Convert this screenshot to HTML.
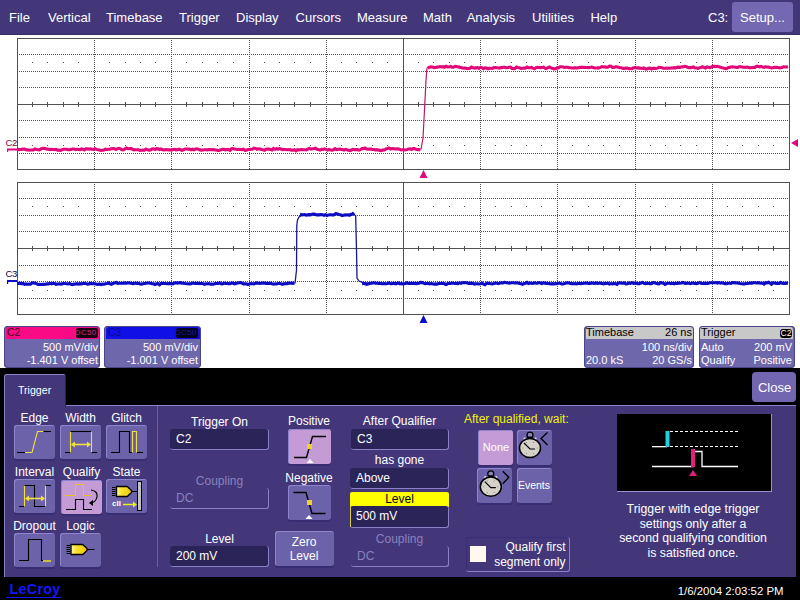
<!DOCTYPE html>
<html><head><meta charset="utf-8"><style>
html,body{margin:0;padding:0;width:800px;height:600px;overflow:hidden;background:#000;}
body{position:relative;font-family:"Liberation Sans", sans-serif;}
div{position:absolute;}
.t{white-space:nowrap;}
</style></head><body>
<div style="left:0px;top:0px;width:800px;height:35px;background:#43377a;box-shadow:inset 0 -1px 0 #382c68"></div><div style="left:0px;top:35px;width:800px;height:333px;background:#fff"></div><div style="left:0px;top:368px;width:800px;height:232px;background:#000"></div><div class="t" style="left:9.00px;top:11.00px;width:600px;font-size:13px;line-height:13px;color:#fff;text-align:left;">File</div><div class="t" style="left:48.00px;top:11.00px;width:600px;font-size:13px;line-height:13px;color:#fff;text-align:left;">Vertical</div><div class="t" style="left:106.00px;top:11.00px;width:600px;font-size:13px;line-height:13px;color:#fff;text-align:left;">Timebase</div><div class="t" style="left:179.00px;top:11.00px;width:600px;font-size:13px;line-height:13px;color:#fff;text-align:left;">Trigger</div><div class="t" style="left:236.00px;top:11.00px;width:600px;font-size:13px;line-height:13px;color:#fff;text-align:left;">Display</div><div class="t" style="left:295.60px;top:11.00px;width:600px;font-size:13px;line-height:13px;color:#fff;text-align:left;">Cursors</div><div class="t" style="left:357.00px;top:11.00px;width:600px;font-size:13px;line-height:13px;color:#fff;text-align:left;">Measure</div><div class="t" style="left:423.00px;top:11.00px;width:600px;font-size:13px;line-height:13px;color:#fff;text-align:left;">Math</div><div class="t" style="left:466.70px;top:11.00px;width:600px;font-size:13px;line-height:13px;color:#fff;text-align:left;">Analysis</div><div class="t" style="left:532.00px;top:11.00px;width:600px;font-size:13px;line-height:13px;color:#fff;text-align:left;">Utilities</div><div class="t" style="left:590.40px;top:11.00px;width:600px;font-size:13px;line-height:13px;color:#fff;text-align:left;">Help</div><div class="t" style="left:708.00px;top:11.00px;width:600px;font-size:13px;line-height:13px;color:#fff;text-align:left;">C3:</div><div style="left:732px;top:2px;width:61px;height:30px;background:#7468b2;border-radius:3px;"></div><div class="t" style="left:462.50px;top:11.00px;width:600px;font-size:13px;line-height:13px;color:#fff;text-align:center;">Setup...</div><svg style="position:absolute;left:0;top:0" width="800" height="370" shape-rendering="crispEdges"><line x1="19" y1="54.5" x2="788" y2="54.5" stroke="#505050" stroke-dasharray="1 1"/><line x1="19" y1="71.5" x2="788" y2="71.5" stroke="#505050" stroke-dasharray="1 1"/><line x1="19" y1="87.5" x2="788" y2="87.5" stroke="#505050" stroke-dasharray="1 1"/><line x1="19" y1="120.5" x2="788" y2="120.5" stroke="#505050" stroke-dasharray="1 1"/><line x1="19" y1="137.5" x2="788" y2="137.5" stroke="#505050" stroke-dasharray="1 1"/><line x1="19" y1="153.5" x2="788" y2="153.5" stroke="#505050" stroke-dasharray="1 1"/><line x1="94.5" y1="40" x2="94.5" y2="169" stroke="#505050" stroke-dasharray="1 1"/><line x1="171.5" y1="40" x2="171.5" y2="169" stroke="#505050" stroke-dasharray="1 1"/><line x1="249.5" y1="40" x2="249.5" y2="169" stroke="#505050" stroke-dasharray="1 1"/><line x1="326.5" y1="40" x2="326.5" y2="169" stroke="#505050" stroke-dasharray="1 1"/><line x1="480.5" y1="40" x2="480.5" y2="169" stroke="#505050" stroke-dasharray="1 1"/><line x1="557.5" y1="40" x2="557.5" y2="169" stroke="#505050" stroke-dasharray="1 1"/><line x1="635.5" y1="40" x2="635.5" y2="169" stroke="#505050" stroke-dasharray="1 1"/><line x1="712.5" y1="40" x2="712.5" y2="169" stroke="#505050" stroke-dasharray="1 1"/><rect x="17.5" y="38.5" width="772" height="131" fill="none" stroke="#505050"/><line x1="17" y1="104.5" x2="789" y2="104.5" stroke="#505050"/><line x1="403.5" y1="38" x2="403.5" y2="169" stroke="#505050"/><rect x="32" y="102" width="1" height="5" fill="#505050"/><rect x="32" y="62" width="1" height="1" fill="#505050"/><rect x="32" y="145" width="1" height="1" fill="#505050"/><rect x="47" y="102" width="1" height="5" fill="#505050"/><rect x="47" y="62" width="1" height="1" fill="#505050"/><rect x="47" y="145" width="1" height="1" fill="#505050"/><rect x="63" y="102" width="1" height="5" fill="#505050"/><rect x="63" y="62" width="1" height="1" fill="#505050"/><rect x="63" y="145" width="1" height="1" fill="#505050"/><rect x="78" y="102" width="1" height="5" fill="#505050"/><rect x="78" y="62" width="1" height="1" fill="#505050"/><rect x="78" y="145" width="1" height="1" fill="#505050"/><rect x="109" y="102" width="1" height="5" fill="#505050"/><rect x="109" y="62" width="1" height="1" fill="#505050"/><rect x="109" y="145" width="1" height="1" fill="#505050"/><rect x="125" y="102" width="1" height="5" fill="#505050"/><rect x="125" y="62" width="1" height="1" fill="#505050"/><rect x="125" y="145" width="1" height="1" fill="#505050"/><rect x="140" y="102" width="1" height="5" fill="#505050"/><rect x="140" y="62" width="1" height="1" fill="#505050"/><rect x="140" y="145" width="1" height="1" fill="#505050"/><rect x="155" y="102" width="1" height="5" fill="#505050"/><rect x="155" y="62" width="1" height="1" fill="#505050"/><rect x="155" y="145" width="1" height="1" fill="#505050"/><rect x="186" y="102" width="1" height="5" fill="#505050"/><rect x="186" y="62" width="1" height="1" fill="#505050"/><rect x="186" y="145" width="1" height="1" fill="#505050"/><rect x="202" y="102" width="1" height="5" fill="#505050"/><rect x="202" y="62" width="1" height="1" fill="#505050"/><rect x="202" y="145" width="1" height="1" fill="#505050"/><rect x="217" y="102" width="1" height="5" fill="#505050"/><rect x="217" y="62" width="1" height="1" fill="#505050"/><rect x="217" y="145" width="1" height="1" fill="#505050"/><rect x="233" y="102" width="1" height="5" fill="#505050"/><rect x="233" y="62" width="1" height="1" fill="#505050"/><rect x="233" y="145" width="1" height="1" fill="#505050"/><rect x="264" y="102" width="1" height="5" fill="#505050"/><rect x="264" y="62" width="1" height="1" fill="#505050"/><rect x="264" y="145" width="1" height="1" fill="#505050"/><rect x="279" y="102" width="1" height="5" fill="#505050"/><rect x="279" y="62" width="1" height="1" fill="#505050"/><rect x="279" y="145" width="1" height="1" fill="#505050"/><rect x="294" y="102" width="1" height="5" fill="#505050"/><rect x="294" y="62" width="1" height="1" fill="#505050"/><rect x="294" y="145" width="1" height="1" fill="#505050"/><rect x="310" y="102" width="1" height="5" fill="#505050"/><rect x="310" y="62" width="1" height="1" fill="#505050"/><rect x="310" y="145" width="1" height="1" fill="#505050"/><rect x="341" y="102" width="1" height="5" fill="#505050"/><rect x="341" y="62" width="1" height="1" fill="#505050"/><rect x="341" y="145" width="1" height="1" fill="#505050"/><rect x="356" y="102" width="1" height="5" fill="#505050"/><rect x="356" y="62" width="1" height="1" fill="#505050"/><rect x="356" y="145" width="1" height="1" fill="#505050"/><rect x="372" y="102" width="1" height="5" fill="#505050"/><rect x="372" y="62" width="1" height="1" fill="#505050"/><rect x="372" y="145" width="1" height="1" fill="#505050"/><rect x="387" y="102" width="1" height="5" fill="#505050"/><rect x="387" y="62" width="1" height="1" fill="#505050"/><rect x="387" y="145" width="1" height="1" fill="#505050"/><rect x="418" y="102" width="1" height="5" fill="#505050"/><rect x="418" y="62" width="1" height="1" fill="#505050"/><rect x="418" y="145" width="1" height="1" fill="#505050"/><rect x="433" y="102" width="1" height="5" fill="#505050"/><rect x="433" y="62" width="1" height="1" fill="#505050"/><rect x="433" y="145" width="1" height="1" fill="#505050"/><rect x="449" y="102" width="1" height="5" fill="#505050"/><rect x="449" y="62" width="1" height="1" fill="#505050"/><rect x="449" y="145" width="1" height="1" fill="#505050"/><rect x="464" y="102" width="1" height="5" fill="#505050"/><rect x="464" y="62" width="1" height="1" fill="#505050"/><rect x="464" y="145" width="1" height="1" fill="#505050"/><rect x="495" y="102" width="1" height="5" fill="#505050"/><rect x="495" y="62" width="1" height="1" fill="#505050"/><rect x="495" y="145" width="1" height="1" fill="#505050"/><rect x="511" y="102" width="1" height="5" fill="#505050"/><rect x="511" y="62" width="1" height="1" fill="#505050"/><rect x="511" y="145" width="1" height="1" fill="#505050"/><rect x="526" y="102" width="1" height="5" fill="#505050"/><rect x="526" y="62" width="1" height="1" fill="#505050"/><rect x="526" y="145" width="1" height="1" fill="#505050"/><rect x="541" y="102" width="1" height="5" fill="#505050"/><rect x="541" y="62" width="1" height="1" fill="#505050"/><rect x="541" y="145" width="1" height="1" fill="#505050"/><rect x="572" y="102" width="1" height="5" fill="#505050"/><rect x="572" y="62" width="1" height="1" fill="#505050"/><rect x="572" y="145" width="1" height="1" fill="#505050"/><rect x="588" y="102" width="1" height="5" fill="#505050"/><rect x="588" y="62" width="1" height="1" fill="#505050"/><rect x="588" y="145" width="1" height="1" fill="#505050"/><rect x="603" y="102" width="1" height="5" fill="#505050"/><rect x="603" y="62" width="1" height="1" fill="#505050"/><rect x="603" y="145" width="1" height="1" fill="#505050"/><rect x="619" y="102" width="1" height="5" fill="#505050"/><rect x="619" y="62" width="1" height="1" fill="#505050"/><rect x="619" y="145" width="1" height="1" fill="#505050"/><rect x="650" y="102" width="1" height="5" fill="#505050"/><rect x="650" y="62" width="1" height="1" fill="#505050"/><rect x="650" y="145" width="1" height="1" fill="#505050"/><rect x="665" y="102" width="1" height="5" fill="#505050"/><rect x="665" y="62" width="1" height="1" fill="#505050"/><rect x="665" y="145" width="1" height="1" fill="#505050"/><rect x="680" y="102" width="1" height="5" fill="#505050"/><rect x="680" y="62" width="1" height="1" fill="#505050"/><rect x="680" y="145" width="1" height="1" fill="#505050"/><rect x="696" y="102" width="1" height="5" fill="#505050"/><rect x="696" y="62" width="1" height="1" fill="#505050"/><rect x="696" y="145" width="1" height="1" fill="#505050"/><rect x="727" y="102" width="1" height="5" fill="#505050"/><rect x="727" y="62" width="1" height="1" fill="#505050"/><rect x="727" y="145" width="1" height="1" fill="#505050"/><rect x="742" y="102" width="1" height="5" fill="#505050"/><rect x="742" y="62" width="1" height="1" fill="#505050"/><rect x="742" y="145" width="1" height="1" fill="#505050"/><rect x="758" y="102" width="1" height="5" fill="#505050"/><rect x="758" y="62" width="1" height="1" fill="#505050"/><rect x="758" y="145" width="1" height="1" fill="#505050"/><rect x="773" y="102" width="1" height="5" fill="#505050"/><rect x="773" y="62" width="1" height="1" fill="#505050"/><rect x="773" y="145" width="1" height="1" fill="#505050"/><line x1="19" y1="198.5" x2="788" y2="198.5" stroke="#505050" stroke-dasharray="1 1"/><line x1="19" y1="215.5" x2="788" y2="215.5" stroke="#505050" stroke-dasharray="1 1"/><line x1="19" y1="231.5" x2="788" y2="231.5" stroke="#505050" stroke-dasharray="1 1"/><line x1="19" y1="265.5" x2="788" y2="265.5" stroke="#505050" stroke-dasharray="1 1"/><line x1="19" y1="281.5" x2="788" y2="281.5" stroke="#505050" stroke-dasharray="1 1"/><line x1="19" y1="298.5" x2="788" y2="298.5" stroke="#505050" stroke-dasharray="1 1"/><line x1="94.5" y1="184" x2="94.5" y2="314" stroke="#505050" stroke-dasharray="1 1"/><line x1="171.5" y1="184" x2="171.5" y2="314" stroke="#505050" stroke-dasharray="1 1"/><line x1="249.5" y1="184" x2="249.5" y2="314" stroke="#505050" stroke-dasharray="1 1"/><line x1="326.5" y1="184" x2="326.5" y2="314" stroke="#505050" stroke-dasharray="1 1"/><line x1="480.5" y1="184" x2="480.5" y2="314" stroke="#505050" stroke-dasharray="1 1"/><line x1="557.5" y1="184" x2="557.5" y2="314" stroke="#505050" stroke-dasharray="1 1"/><line x1="635.5" y1="184" x2="635.5" y2="314" stroke="#505050" stroke-dasharray="1 1"/><line x1="712.5" y1="184" x2="712.5" y2="314" stroke="#505050" stroke-dasharray="1 1"/><rect x="17.5" y="182.5" width="772" height="132" fill="none" stroke="#505050"/><line x1="17" y1="248.5" x2="789" y2="248.5" stroke="#505050"/><line x1="403.5" y1="182" x2="403.5" y2="314" stroke="#505050"/><rect x="32" y="246" width="1" height="5" fill="#505050"/><rect x="32" y="206" width="1" height="1" fill="#505050"/><rect x="32" y="290" width="1" height="1" fill="#505050"/><rect x="47" y="246" width="1" height="5" fill="#505050"/><rect x="47" y="206" width="1" height="1" fill="#505050"/><rect x="47" y="290" width="1" height="1" fill="#505050"/><rect x="63" y="246" width="1" height="5" fill="#505050"/><rect x="63" y="206" width="1" height="1" fill="#505050"/><rect x="63" y="290" width="1" height="1" fill="#505050"/><rect x="78" y="246" width="1" height="5" fill="#505050"/><rect x="78" y="206" width="1" height="1" fill="#505050"/><rect x="78" y="290" width="1" height="1" fill="#505050"/><rect x="109" y="246" width="1" height="5" fill="#505050"/><rect x="109" y="206" width="1" height="1" fill="#505050"/><rect x="109" y="290" width="1" height="1" fill="#505050"/><rect x="125" y="246" width="1" height="5" fill="#505050"/><rect x="125" y="206" width="1" height="1" fill="#505050"/><rect x="125" y="290" width="1" height="1" fill="#505050"/><rect x="140" y="246" width="1" height="5" fill="#505050"/><rect x="140" y="206" width="1" height="1" fill="#505050"/><rect x="140" y="290" width="1" height="1" fill="#505050"/><rect x="155" y="246" width="1" height="5" fill="#505050"/><rect x="155" y="206" width="1" height="1" fill="#505050"/><rect x="155" y="290" width="1" height="1" fill="#505050"/><rect x="186" y="246" width="1" height="5" fill="#505050"/><rect x="186" y="206" width="1" height="1" fill="#505050"/><rect x="186" y="290" width="1" height="1" fill="#505050"/><rect x="202" y="246" width="1" height="5" fill="#505050"/><rect x="202" y="206" width="1" height="1" fill="#505050"/><rect x="202" y="290" width="1" height="1" fill="#505050"/><rect x="217" y="246" width="1" height="5" fill="#505050"/><rect x="217" y="206" width="1" height="1" fill="#505050"/><rect x="217" y="290" width="1" height="1" fill="#505050"/><rect x="233" y="246" width="1" height="5" fill="#505050"/><rect x="233" y="206" width="1" height="1" fill="#505050"/><rect x="233" y="290" width="1" height="1" fill="#505050"/><rect x="264" y="246" width="1" height="5" fill="#505050"/><rect x="264" y="206" width="1" height="1" fill="#505050"/><rect x="264" y="290" width="1" height="1" fill="#505050"/><rect x="279" y="246" width="1" height="5" fill="#505050"/><rect x="279" y="206" width="1" height="1" fill="#505050"/><rect x="279" y="290" width="1" height="1" fill="#505050"/><rect x="294" y="246" width="1" height="5" fill="#505050"/><rect x="294" y="206" width="1" height="1" fill="#505050"/><rect x="294" y="290" width="1" height="1" fill="#505050"/><rect x="310" y="246" width="1" height="5" fill="#505050"/><rect x="310" y="206" width="1" height="1" fill="#505050"/><rect x="310" y="290" width="1" height="1" fill="#505050"/><rect x="341" y="246" width="1" height="5" fill="#505050"/><rect x="341" y="206" width="1" height="1" fill="#505050"/><rect x="341" y="290" width="1" height="1" fill="#505050"/><rect x="356" y="246" width="1" height="5" fill="#505050"/><rect x="356" y="206" width="1" height="1" fill="#505050"/><rect x="356" y="290" width="1" height="1" fill="#505050"/><rect x="372" y="246" width="1" height="5" fill="#505050"/><rect x="372" y="206" width="1" height="1" fill="#505050"/><rect x="372" y="290" width="1" height="1" fill="#505050"/><rect x="387" y="246" width="1" height="5" fill="#505050"/><rect x="387" y="206" width="1" height="1" fill="#505050"/><rect x="387" y="290" width="1" height="1" fill="#505050"/><rect x="418" y="246" width="1" height="5" fill="#505050"/><rect x="418" y="206" width="1" height="1" fill="#505050"/><rect x="418" y="290" width="1" height="1" fill="#505050"/><rect x="433" y="246" width="1" height="5" fill="#505050"/><rect x="433" y="206" width="1" height="1" fill="#505050"/><rect x="433" y="290" width="1" height="1" fill="#505050"/><rect x="449" y="246" width="1" height="5" fill="#505050"/><rect x="449" y="206" width="1" height="1" fill="#505050"/><rect x="449" y="290" width="1" height="1" fill="#505050"/><rect x="464" y="246" width="1" height="5" fill="#505050"/><rect x="464" y="206" width="1" height="1" fill="#505050"/><rect x="464" y="290" width="1" height="1" fill="#505050"/><rect x="495" y="246" width="1" height="5" fill="#505050"/><rect x="495" y="206" width="1" height="1" fill="#505050"/><rect x="495" y="290" width="1" height="1" fill="#505050"/><rect x="511" y="246" width="1" height="5" fill="#505050"/><rect x="511" y="206" width="1" height="1" fill="#505050"/><rect x="511" y="290" width="1" height="1" fill="#505050"/><rect x="526" y="246" width="1" height="5" fill="#505050"/><rect x="526" y="206" width="1" height="1" fill="#505050"/><rect x="526" y="290" width="1" height="1" fill="#505050"/><rect x="541" y="246" width="1" height="5" fill="#505050"/><rect x="541" y="206" width="1" height="1" fill="#505050"/><rect x="541" y="290" width="1" height="1" fill="#505050"/><rect x="572" y="246" width="1" height="5" fill="#505050"/><rect x="572" y="206" width="1" height="1" fill="#505050"/><rect x="572" y="290" width="1" height="1" fill="#505050"/><rect x="588" y="246" width="1" height="5" fill="#505050"/><rect x="588" y="206" width="1" height="1" fill="#505050"/><rect x="588" y="290" width="1" height="1" fill="#505050"/><rect x="603" y="246" width="1" height="5" fill="#505050"/><rect x="603" y="206" width="1" height="1" fill="#505050"/><rect x="603" y="290" width="1" height="1" fill="#505050"/><rect x="619" y="246" width="1" height="5" fill="#505050"/><rect x="619" y="206" width="1" height="1" fill="#505050"/><rect x="619" y="290" width="1" height="1" fill="#505050"/><rect x="650" y="246" width="1" height="5" fill="#505050"/><rect x="650" y="206" width="1" height="1" fill="#505050"/><rect x="650" y="290" width="1" height="1" fill="#505050"/><rect x="665" y="246" width="1" height="5" fill="#505050"/><rect x="665" y="206" width="1" height="1" fill="#505050"/><rect x="665" y="290" width="1" height="1" fill="#505050"/><rect x="680" y="246" width="1" height="5" fill="#505050"/><rect x="680" y="206" width="1" height="1" fill="#505050"/><rect x="680" y="290" width="1" height="1" fill="#505050"/><rect x="696" y="246" width="1" height="5" fill="#505050"/><rect x="696" y="206" width="1" height="1" fill="#505050"/><rect x="696" y="290" width="1" height="1" fill="#505050"/><rect x="727" y="246" width="1" height="5" fill="#505050"/><rect x="727" y="206" width="1" height="1" fill="#505050"/><rect x="727" y="290" width="1" height="1" fill="#505050"/><rect x="742" y="246" width="1" height="5" fill="#505050"/><rect x="742" y="206" width="1" height="1" fill="#505050"/><rect x="742" y="290" width="1" height="1" fill="#505050"/><rect x="758" y="246" width="1" height="5" fill="#505050"/><rect x="758" y="206" width="1" height="1" fill="#505050"/><rect x="758" y="290" width="1" height="1" fill="#505050"/><rect x="773" y="246" width="1" height="5" fill="#505050"/><rect x="773" y="206" width="1" height="1" fill="#505050"/><rect x="773" y="290" width="1" height="1" fill="#505050"/></svg><svg style="position:absolute;left:0;top:0" width="800" height="370"><polyline points="17.0,149.38 18.5,149.66 20.0,149.49 21.5,149.35 23.0,148.99 24.5,149.10 26.0,149.76 27.5,149.84 29.0,150.17 30.5,150.01 32.0,149.98 33.5,149.87 35.0,148.97 36.5,149.56 38.0,149.76 39.5,149.87 41.0,148.96 42.5,148.38 44.0,148.42 45.5,148.64 47.0,149.11 48.5,149.24 50.0,149.57 51.5,149.24 53.0,149.48 54.5,149.65 56.0,149.28 57.5,150.13 59.0,150.12 60.5,150.40 62.0,149.75 63.5,149.31 65.0,149.22 66.5,149.27 68.0,149.63 69.5,149.68 71.0,149.39 72.5,148.99 74.0,148.95 75.5,149.70 77.0,149.24 78.5,149.44 80.0,149.64 81.5,148.90 83.0,149.14 84.5,149.86 86.0,148.79 87.5,148.91 89.0,149.08 90.5,148.86 92.0,149.32 93.5,149.35 95.0,148.73 96.5,149.39 98.0,149.72 99.5,150.03 101.0,150.45 102.5,150.21 104.0,149.96 105.5,149.17 107.0,149.56 108.5,149.24 110.0,149.11 111.5,148.68 113.0,148.55 114.5,148.67 116.0,149.55 117.5,148.59 119.0,148.28 120.5,148.85 122.0,149.73 123.5,149.87 125.0,148.84 126.5,147.95 128.0,148.70 129.5,148.66 131.0,148.47 132.5,149.29 134.0,149.84 135.5,149.75 137.0,149.73 138.5,149.80 140.0,150.37 141.5,150.27 143.0,150.16 144.5,150.11 146.0,149.13 147.5,149.82 149.0,150.09 150.5,150.06 152.0,148.92 153.5,148.83 155.0,149.44 156.5,148.62 158.0,148.85 159.5,149.54 161.0,148.90 162.5,149.83 164.0,149.91 165.5,149.64 167.0,149.69 168.5,149.87 170.0,149.74 171.5,150.12 173.0,149.54 174.5,149.30 176.0,149.81 177.5,149.66 179.0,149.16 180.5,149.68 182.0,150.23 183.5,149.70 185.0,148.96 186.5,149.07 188.0,149.13 189.5,149.10 191.0,149.85 192.5,149.21 194.0,149.85 195.5,149.09 197.0,148.86 198.5,149.36 200.0,149.88 201.5,150.07 203.0,149.95 204.5,149.79 206.0,149.70 207.5,149.83 209.0,149.57 210.5,149.62 212.0,149.78 213.5,149.62 215.0,149.87 216.5,149.93 218.0,150.61 219.5,150.26 221.0,149.72 222.5,149.41 224.0,149.39 225.5,149.80 227.0,149.48 228.5,149.61 230.0,150.34 231.5,148.80 233.0,148.52 234.5,148.97 236.0,149.31 237.5,149.44 239.0,149.22 240.5,149.57 242.0,149.61 243.5,149.28 245.0,150.41 246.5,150.15 248.0,149.58 249.5,149.45 251.0,149.31 252.5,149.30 254.0,148.10 255.5,148.38 257.0,149.22 258.5,148.75 260.0,148.96 261.5,149.55 263.0,149.85 264.5,150.32 266.0,149.17 267.5,149.08 269.0,149.03 270.5,149.44 272.0,149.89 273.5,148.47 275.0,149.31 276.5,148.67 278.0,149.25 279.5,148.61 281.0,148.98 282.5,149.66 284.0,149.47 285.5,149.50 287.0,149.79 288.5,149.67 290.0,149.50 291.5,150.12 293.0,150.28 294.5,149.77 296.0,150.83 297.5,149.71 299.0,149.97 300.5,149.59 302.0,149.55 303.5,149.78 305.0,149.70 306.5,149.84 308.0,148.94 309.5,148.42 311.0,149.06 312.5,148.73 314.0,148.50 315.5,148.17 317.0,149.20 318.5,149.58 320.0,150.14 321.5,149.39 323.0,149.36 324.5,148.83 326.0,149.37 327.5,150.06 329.0,149.36 330.5,150.04 332.0,150.19 333.5,149.76 335.0,148.69 336.5,149.57 338.0,149.42 339.5,149.10 341.0,149.36 342.5,149.52 344.0,150.11 345.5,149.33 347.0,149.83 348.5,150.29 350.0,150.54 351.5,149.96 353.0,149.36 354.5,149.79 356.0,149.65 357.5,149.56 359.0,150.10 360.5,149.66 362.0,148.48 363.5,148.63 365.0,148.06 366.5,148.92 368.0,149.21 369.5,148.97 371.0,149.09 372.5,149.54 374.0,149.47 375.5,150.00 377.0,149.68 378.5,149.99 380.0,150.38 381.5,150.66 383.0,149.81 384.5,149.99 386.0,148.86 387.5,148.54 389.0,147.95 390.5,148.96 392.0,148.53 393.5,148.82 395.0,148.92 396.5,149.04 398.0,148.87 399.5,149.13 401.0,149.99 402.5,149.72 404.0,149.78 405.5,150.02 407.0,149.63 408.5,148.92 410.0,148.81 411.5,149.47 413.0,148.65 414.5,148.62 416.0,149.33 417.5,149.66 419.0,149.50 420.5,149.77" fill="none" stroke="#e2087a" stroke-width="3.1"/><polyline points="421,149.5 423,138 424.5,110 426,80 427,68 429,66.5" fill="none" stroke="#b8186a" stroke-width="1.2"/><polyline points="428.0,67.97 429.5,67.37 431.0,66.83 432.5,66.91 434.0,67.65 435.5,67.42 437.0,67.12 438.5,67.00 440.0,66.58 441.5,66.96 443.0,66.70 444.5,67.24 446.0,66.34 447.5,67.00 449.0,66.96 450.5,66.35 452.0,67.19 453.5,67.24 455.0,66.38 456.5,66.48 458.0,67.06 459.5,67.08 461.0,67.64 462.5,67.96 464.0,68.12 465.5,68.06 467.0,68.48 468.5,68.43 470.0,68.30 471.5,67.08 473.0,67.69 474.5,68.25 476.0,67.86 477.5,67.54 479.0,68.44 480.5,67.31 482.0,67.64 483.5,68.71 485.0,67.85 486.5,68.06 488.0,68.73 489.5,68.22 491.0,68.23 492.5,68.38 494.0,67.66 495.5,67.60 497.0,67.73 498.5,68.05 500.0,67.85 501.5,67.66 503.0,67.18 504.5,67.19 506.0,67.75 507.5,67.74 509.0,67.30 510.5,67.04 512.0,68.46 513.5,68.63 515.0,68.51 516.5,66.98 518.0,67.51 519.5,67.76 521.0,68.45 522.5,68.30 524.0,67.99 525.5,68.07 527.0,67.01 528.5,67.71 530.0,67.81 531.5,67.41 533.0,68.08 534.5,68.70 536.0,67.63 537.5,67.32 539.0,67.56 540.5,67.66 542.0,67.46 543.5,67.08 545.0,68.24 546.5,68.45 548.0,67.57 549.5,66.98 551.0,67.99 552.5,68.28 554.0,68.83 555.5,68.70 557.0,67.87 558.5,67.88 560.0,66.79 561.5,66.78 563.0,67.08 564.5,67.52 566.0,67.23 567.5,67.32 569.0,67.64 570.5,67.79 572.0,68.00 573.5,67.94 575.0,67.66 576.5,67.99 578.0,67.86 579.5,67.38 581.0,67.19 582.5,67.35 584.0,67.40 585.5,67.55 587.0,67.57 588.5,67.66 590.0,67.58 591.5,67.02 593.0,67.44 594.5,67.98 596.0,68.02 597.5,67.77 599.0,67.90 600.5,67.35 602.0,66.59 603.5,67.02 605.0,66.84 606.5,67.47 608.0,67.04 609.5,66.08 611.0,66.22 612.5,67.48 614.0,67.36 615.5,66.84 617.0,66.80 618.5,67.35 620.0,67.68 621.5,67.73 623.0,68.34 624.5,68.36 626.0,68.05 627.5,68.14 629.0,68.67 630.5,68.68 632.0,68.71 633.5,67.78 635.0,67.64 636.5,67.95 638.0,67.68 639.5,68.13 641.0,68.18 642.5,68.36 644.0,67.96 645.5,68.96 647.0,68.98 648.5,68.33 650.0,68.08 651.5,69.05 653.0,68.32 654.5,68.42 656.0,68.54 657.5,68.16 659.0,67.41 660.5,67.57 662.0,67.75 663.5,68.20 665.0,68.31 666.5,68.04 668.0,68.25 669.5,68.23 671.0,68.07 672.5,67.91 674.0,67.67 675.5,67.95 677.0,67.34 678.5,67.16 680.0,67.34 681.5,66.78 683.0,66.91 684.5,66.28 686.0,66.50 687.5,67.20 689.0,67.61 690.5,67.58 692.0,67.49 693.5,66.89 695.0,68.00 696.5,68.07 698.0,68.37 699.5,67.67 701.0,67.56 702.5,66.76 704.0,67.44 705.5,67.93 707.0,66.94 708.5,67.18 710.0,67.63 711.5,66.83 713.0,66.31 714.5,66.35 716.0,66.57 717.5,66.35 719.0,66.86 720.5,67.27 722.0,67.69 723.5,67.97 725.0,68.50 726.5,68.66 728.0,67.65 729.5,67.40 731.0,67.00 732.5,66.76 734.0,67.06 735.5,67.28 737.0,67.63 738.5,66.90 740.0,66.62 741.5,67.00 743.0,67.15 744.5,67.19 746.0,67.33 747.5,67.09 749.0,67.61 750.5,67.77 752.0,67.66 753.5,67.33 755.0,67.36 756.5,66.23 758.0,66.34 759.5,66.86 761.0,66.48 762.5,67.02 764.0,67.32 765.5,66.81 767.0,67.01 768.5,67.11 770.0,67.51 771.5,67.82 773.0,67.72 774.5,67.29 776.0,67.35 777.5,67.42 779.0,67.82 780.5,67.87 782.0,67.43 783.5,66.89 785.0,67.01 786.5,66.91 788.0,66.69" fill="none" stroke="#e2087a" stroke-width="3.1"/><line x1="7" y1="149.5" x2="17" y2="149.5" stroke="#e2087a" stroke-width="2"/><rect x="7" y="149" width="1.2" height="3" fill="#e2087a"/><polygon points="419.5,178 427.5,178 423.5,170" fill="#e2087a"/><polygon points="791,143 798,139 798,147" fill="#e2087a"/><polyline points="17.0,283.45 18.5,283.28 20.0,283.41 21.5,283.65 23.0,283.43 24.5,284.39 26.0,283.90 27.5,284.18 29.0,283.96 30.5,284.22 32.0,282.98 33.5,282.89 35.0,283.23 36.5,283.58 38.0,284.48 39.5,284.22 41.0,284.44 42.5,284.37 44.0,284.40 45.5,284.25 47.0,283.88 48.5,283.93 50.0,283.33 51.5,283.87 53.0,283.32 54.5,283.49 56.0,284.34 57.5,283.92 59.0,283.76 60.5,284.12 62.0,283.88 63.5,283.41 65.0,283.55 66.5,283.76 68.0,283.94 69.5,283.46 71.0,284.17 72.5,284.57 74.0,284.15 75.5,284.00 77.0,283.63 78.5,284.14 80.0,283.60 81.5,283.83 83.0,283.51 84.5,283.23 86.0,283.62 87.5,284.11 89.0,283.86 90.5,283.45 92.0,283.79 93.5,283.66 95.0,283.72 96.5,284.24 98.0,284.40 99.5,283.83 101.0,284.61 102.5,284.17 104.0,284.22 105.5,283.67 107.0,283.58 108.5,282.85 110.0,283.83 111.5,284.24 113.0,283.46 114.5,282.87 116.0,282.48 117.5,283.36 119.0,283.23 120.5,283.31 122.0,283.26 123.5,283.31 125.0,282.95 126.5,283.18 128.0,282.73 129.5,283.01 131.0,283.33 132.5,283.59 134.0,283.46 135.5,283.11 137.0,283.33 138.5,283.21 140.0,283.95 141.5,284.08 143.0,283.80 144.5,283.49 146.0,283.21 147.5,282.95 149.0,283.03 150.5,283.34 152.0,283.61 153.5,283.79 155.0,284.51 156.5,283.83 158.0,283.70 159.5,284.74 161.0,283.50 162.5,283.29 164.0,283.44 165.5,283.53 167.0,283.68 168.5,283.51 170.0,283.65 171.5,283.61 173.0,283.88 174.5,282.97 176.0,282.83 177.5,283.10 179.0,282.84 180.5,282.69 182.0,283.26 183.5,283.10 185.0,283.51 186.5,283.81 188.0,283.81 189.5,283.89 191.0,283.69 192.5,283.05 194.0,283.22 195.5,283.51 197.0,283.30 198.5,283.34 200.0,283.70 201.5,283.27 203.0,283.62 204.5,284.32 206.0,283.77 207.5,283.72 209.0,283.57 210.5,284.16 212.0,284.02 213.5,284.17 215.0,283.63 216.5,283.57 218.0,283.54 219.5,282.81 221.0,283.66 222.5,283.96 224.0,283.08 225.5,283.54 227.0,283.47 228.5,283.66 230.0,283.74 231.5,283.05 233.0,283.14 234.5,283.88 236.0,283.50 237.5,283.09 239.0,282.71 240.5,282.54 242.0,283.06 243.5,283.91 245.0,283.92 246.5,283.85 248.0,284.60 249.5,283.95 251.0,283.50 252.5,283.71 254.0,283.85 255.5,283.30 257.0,282.91 258.5,283.26 260.0,283.46 261.5,282.95 263.0,283.09 264.5,283.04 266.0,283.41 267.5,283.40 269.0,283.40 270.5,283.30 272.0,283.80 273.5,284.24 275.0,283.80 276.5,284.02 278.0,283.51 279.5,283.53 281.0,283.82 282.5,284.30 284.0,283.83 285.5,283.67 287.0,283.68 288.5,283.01 290.0,283.21 291.5,283.06 293.0,283.38 294.5,282.98" fill="none" stroke="#0c0cc4" stroke-width="3.1"/><polyline points="295,283.5 296.5,270 296.8,225 297.5,220 299,217 302,215.5 306,215" fill="none" stroke="#1a1890" stroke-width="1.3"/><polyline points="300.0,214.21 301.5,214.52 303.0,214.78 304.5,214.61 306.0,215.07 307.5,214.88 309.0,214.62 310.5,214.88 312.0,214.22 313.5,214.17 315.0,214.39 316.5,214.86 318.0,214.73 319.5,214.83 321.0,214.50 322.5,214.67 324.0,215.31 325.5,214.74 327.0,215.62 328.5,214.93 330.0,214.77 331.5,214.73 333.0,215.04 334.5,214.31 336.0,213.51 337.5,214.11 339.0,214.54 340.5,214.72 342.0,215.62 343.5,215.18 345.0,214.92 346.5,215.03 348.0,214.87 349.5,215.27 351.0,214.35 352.5,214.13 354.0,212.76" fill="none" stroke="#0c0cc4" stroke-width="3.1"/><polyline points="354,214.3 355.7,216 356.5,250 357,278 359,281 363,282.7 370,283.3" fill="none" stroke="#1a1890" stroke-width="1.3"/><polyline points="362.0,283.62 363.5,283.35 365.0,283.70 366.5,284.40 368.0,283.96 369.5,283.59 371.0,283.28 372.5,282.95 374.0,282.84 375.5,283.28 377.0,283.30 378.5,283.33 380.0,283.25 381.5,283.63 383.0,283.70 384.5,283.48 386.0,283.68 387.5,283.46 389.0,282.94 390.5,283.66 392.0,283.70 393.5,283.16 395.0,283.65 396.5,283.65 398.0,282.88 399.5,283.69 401.0,283.67 402.5,283.88 404.0,283.73 405.5,283.50 407.0,282.80 408.5,283.39 410.0,283.36 411.5,283.22 413.0,283.39 414.5,283.39 416.0,283.62 417.5,283.35 419.0,283.31 420.5,282.45 422.0,282.62 423.5,283.16 425.0,283.75 426.5,283.43 428.0,283.33 429.5,283.95 431.0,283.56 432.5,283.75 434.0,284.24 435.5,283.88 437.0,284.14 438.5,283.52 440.0,283.51 441.5,283.40 443.0,283.40 444.5,283.81 446.0,284.56 447.5,283.79 449.0,283.37 450.5,283.54 452.0,283.02 453.5,283.33 455.0,283.55 456.5,283.34 458.0,283.54 459.5,282.82 461.0,283.32 462.5,282.69 464.0,282.66 465.5,282.69 467.0,282.77 468.5,283.33 470.0,283.35 471.5,283.17 473.0,283.44 474.5,284.02 476.0,283.73 477.5,283.71 479.0,284.04 480.5,283.85 482.0,283.12 483.5,284.19 485.0,284.72 486.5,283.36 488.0,283.32 489.5,283.48 491.0,283.79 492.5,283.86 494.0,283.53 495.5,283.02 497.0,283.17 498.5,283.64 500.0,283.07 501.5,282.75 503.0,282.96 504.5,282.32 506.0,282.61 507.5,282.71 509.0,283.13 510.5,282.92 512.0,282.72 513.5,282.79 515.0,282.98 516.5,282.84 518.0,283.03 519.5,283.44 521.0,283.86 522.5,284.32 524.0,283.60 525.5,283.31 527.0,282.31 528.5,283.47 530.0,283.11 531.5,283.17 533.0,283.43 534.5,282.84 536.0,283.21 537.5,283.23 539.0,282.53 540.5,282.95 542.0,283.57 543.5,282.72 545.0,283.27 546.5,283.37 548.0,283.53 549.5,283.61 551.0,284.01 552.5,283.64 554.0,283.85 555.5,283.47 557.0,283.69 558.5,283.21 560.0,283.20 561.5,283.93 563.0,283.86 564.5,283.57 566.0,283.01 567.5,282.81 569.0,283.08 570.5,283.54 572.0,283.62 573.5,283.70 575.0,283.52 576.5,283.97 578.0,283.55 579.5,283.23 581.0,283.61 582.5,283.51 584.0,283.32 585.5,283.08 587.0,283.06 588.5,283.41 590.0,283.51 591.5,282.94 593.0,283.25 594.5,283.34 596.0,282.93 597.5,283.39 599.0,283.24 600.5,283.13 602.0,283.52 603.5,283.96 605.0,283.42 606.5,283.55 608.0,283.10 609.5,284.10 611.0,283.59 612.5,283.95 614.0,283.43 615.5,283.70 617.0,284.43 618.5,282.96 620.0,282.92 621.5,283.27 623.0,283.25 624.5,283.00 626.0,283.98 627.5,283.74 629.0,282.91 630.5,283.41 632.0,282.67 633.5,283.39 635.0,283.12 636.5,283.25 638.0,283.77 639.5,283.63 641.0,282.94 642.5,282.41 644.0,283.24 645.5,283.56 647.0,283.13 648.5,283.54 650.0,283.64 651.5,283.77 653.0,282.68 654.5,282.80 656.0,283.36 657.5,283.63 659.0,283.85 660.5,282.65 662.0,282.98 663.5,283.30 665.0,284.32 666.5,283.53 668.0,283.31 669.5,283.32 671.0,283.67 672.5,283.34 674.0,283.78 675.5,283.28 677.0,283.39 678.5,283.14 680.0,283.27 681.5,283.01 683.0,282.48 684.5,283.25 686.0,283.39 687.5,283.13 689.0,283.28 690.5,283.68 692.0,283.14 693.5,283.16 695.0,283.43 696.5,283.59 698.0,283.34 699.5,282.48 701.0,283.31 702.5,283.43 704.0,283.39 705.5,283.24 707.0,283.37 708.5,283.17 710.0,282.81 711.5,282.71 713.0,282.71 714.5,282.70 716.0,282.48 717.5,283.06 719.0,282.63 720.5,283.16 722.0,282.81 723.5,283.15 725.0,283.76 726.5,283.66 728.0,283.22 729.5,283.27 731.0,283.34 732.5,282.63 734.0,282.66 735.5,282.98 737.0,282.92 738.5,283.10 740.0,283.48 741.5,283.71 743.0,283.91 744.5,283.90 746.0,283.55 747.5,283.44 749.0,283.28 750.5,283.16 752.0,283.14 753.5,282.52 755.0,282.70 756.5,282.93 758.0,282.69 759.5,282.92 761.0,283.28 762.5,283.22 764.0,284.08 765.5,282.73 767.0,282.87 768.5,282.31 770.0,283.10 771.5,284.24 773.0,282.86 774.5,283.09 776.0,283.38 777.5,283.23 779.0,283.48 780.5,282.51 782.0,283.17 783.5,283.37 785.0,283.35 786.5,283.10 788.0,283.43" fill="none" stroke="#0c0cc4" stroke-width="3.1"/><line x1="7" y1="281" x2="17" y2="281" stroke="#0c0cc4" stroke-width="2"/><rect x="7" y="281" width="1.2" height="3" fill="#0c0cc4"/><polygon points="419.5,323 427.5,323 423.5,315" fill="#0c0cc4"/></svg><div class="t" style="left:5.50px;top:137.87px;width:600px;font-size:9.6px;line-height:9.6px;color:#701040;text-align:left;letter-spacing:-0.4px;">C2</div><div class="t" style="left:5.50px;top:269.17px;width:600px;font-size:9.6px;line-height:9.6px;color:#0a0a50;text-align:left;letter-spacing:-0.4px;">C3</div><div style="left:4px;top:325.5px;width:96px;height:42px;background:#6f67ab;border-radius:4px;box-shadow:inset 0 0 0 1px #4c4488;"></div><div style="left:5.5px;top:326.8px;width:93px;height:12px;background:#fa0a84;border-radius:3px 3px 0 0;"></div><div style="left:76px;top:328px;width:22px;height:10px;background:#1a0010;border-radius:2px;"></div><div class="t" style="left:7.00px;top:327.11px;width:600px;font-size:10.5px;line-height:10.5px;color:#400020;text-align:left;">C2</div><div class="t" style="left:-503.50px;top:329.23px;width:600px;font-size:8px;line-height:8px;color:#c03080;text-align:right;letter-spacing:0.3px;">DC50</div><div class="t" style="left:-502.00px;top:342.19px;width:600px;font-size:11px;line-height:11px;color:#fff;text-align:right;">500 mV/div</div><div class="t" style="left:-502.00px;top:355.19px;width:600px;font-size:11px;line-height:11px;color:#fff;text-align:right;">-1.401 V offset</div><div style="left:104px;top:325.5px;width:97px;height:42px;background:#6f67ab;border-radius:4px;box-shadow:inset 0 0 0 1px #4c4488;"></div><div style="left:105.5px;top:326.8px;width:94px;height:12px;background:#1010e6;border-radius:3px 3px 0 0;"></div><div style="left:176px;top:328px;width:22px;height:10px;background:#000020;border-radius:2px;"></div><div class="t" style="left:108.00px;top:327.11px;width:600px;font-size:10.5px;line-height:10.5px;color:#0a0a90;text-align:left;">C3</div><div class="t" style="left:-403.50px;top:329.23px;width:600px;font-size:8px;line-height:8px;color:#1a1a90;text-align:right;letter-spacing:0.3px;">DC50</div><div class="t" style="left:-402.00px;top:342.19px;width:600px;font-size:11px;line-height:11px;color:#fff;text-align:right;">500 mV/div</div><div class="t" style="left:-402.00px;top:355.19px;width:600px;font-size:11px;line-height:11px;color:#fff;text-align:right;">-1.001 V offset</div><div style="left:584px;top:325.5px;width:110px;height:42px;background:#6f67ab;border-radius:4px;box-shadow:inset 0 0 0 1px #4c4488;"></div><div style="left:585.5px;top:326.8px;width:107px;height:12px;background:#c8c8c8;border-radius:3px 3px 0 0;"></div><div class="t" style="left:586.00px;top:327.29px;width:600px;font-size:11px;line-height:11px;color:#000;text-align:left;">Timebase</div><div class="t" style="left:92.00px;top:327.29px;width:600px;font-size:11px;line-height:11px;color:#000;text-align:right;">26 ns</div><div class="t" style="left:92.00px;top:342.09px;width:600px;font-size:11px;line-height:11px;color:#fff;text-align:right;">100 ns/div</div><div class="t" style="left:586.00px;top:354.99px;width:600px;font-size:11px;line-height:11px;color:#fff;text-align:left;">20.0 kS</div><div class="t" style="left:92.00px;top:354.99px;width:600px;font-size:11px;line-height:11px;color:#fff;text-align:right;">20 GS/s</div><div style="left:698.5px;top:325.5px;width:96.0px;height:42px;background:#6f67ab;border-radius:4px;box-shadow:inset 0 0 0 1px #4c4488;"></div><div style="left:700.0px;top:326.8px;width:93.0px;height:12px;background:#c8c8c8;border-radius:3px 3px 0 0;"></div><div class="t" style="left:701.00px;top:327.29px;width:600px;font-size:11px;line-height:11px;color:#000;text-align:left;">Trigger</div><div style="left:780px;top:328.5px;width:12px;height:9px;background:#000;border-radius:3px;"></div><div class="t" style="left:486.00px;top:329.30px;width:600px;font-size:8.5px;line-height:8.5px;color:#fff;text-align:center;">C2</div><div class="t" style="left:701.00px;top:342.09px;width:600px;font-size:11px;line-height:11px;color:#fff;text-align:left;">Auto</div><div class="t" style="left:192.00px;top:342.09px;width:600px;font-size:11px;line-height:11px;color:#fff;text-align:right;">200 mV</div><div class="t" style="left:701.00px;top:354.99px;width:600px;font-size:11px;line-height:11px;color:#fff;text-align:left;">Qualify</div><div class="t" style="left:192.00px;top:354.99px;width:600px;font-size:11px;line-height:11px;color:#fff;text-align:right;">Positive</div><div style="left:4px;top:405px;width:792px;height:172px;background:#43377a;border-top:1px solid #8a82c8;border-left:1px solid #8a82c8;box-sizing:border-box;"></div><div style="left:4px;top:374px;width:62px;height:33px;background:#43377a;border-top:1px solid #8a82c8;border-left:1px solid #8a82c8;border-right:1px solid #2a2060;border-radius:3px 3px 0 0;box-sizing:border-box;"></div><div style="left:5px;top:405px;width:60px;height:2px;background:#43377a;"></div><div class="t" style="left:18.00px;top:385.33px;width:600px;font-size:10.6px;line-height:10.6px;color:#fff;text-align:left;">Trigger</div><div style="left:752px;top:372px;width:44px;height:30px;background:#7266b0;border-radius:4px;"></div><div class="t" style="left:474.50px;top:381.00px;width:600px;font-size:13px;line-height:13px;color:#fff;text-align:center;">Close</div><div style="left:157px;top:406px;width:1px;height:161px;background:#6a60a8;"></div><div class="t" style="left:-265.50px;top:412.34px;width:600px;font-size:12px;line-height:12px;color:#fff;text-align:center;">Edge</div><div class="t" style="left:-219.50px;top:412.34px;width:600px;font-size:12px;line-height:12px;color:#fff;text-align:center;">Width</div><div class="t" style="left:-173.50px;top:412.34px;width:600px;font-size:12px;line-height:12px;color:#fff;text-align:center;">Glitch</div><div class="t" style="left:-265.50px;top:466.34px;width:600px;font-size:12px;line-height:12px;color:#fff;text-align:center;">Interval</div><div class="t" style="left:-218.50px;top:466.34px;width:600px;font-size:12px;line-height:12px;color:#fff;text-align:center;">Qualify</div><div class="t" style="left:-173.50px;top:466.34px;width:600px;font-size:12px;line-height:12px;color:#fff;text-align:center;">State</div><div class="t" style="left:-265.50px;top:519.84px;width:600px;font-size:12px;line-height:12px;color:#fff;text-align:center;">Dropout</div><div class="t" style="left:-219.50px;top:519.84px;width:600px;font-size:12px;line-height:12px;color:#fff;text-align:center;">Logic</div><div style="left:14px;top:425px;width:41px;height:34px;background:#6c62aa;border-radius:3px;box-shadow:inset 1px 1px 0 #8e86cc, 0 2px 0 #382d72;"></div><div style="left:60px;top:425px;width:41px;height:34px;background:#6c62aa;border-radius:3px;box-shadow:inset 1px 1px 0 #8e86cc, 0 2px 0 #382d72;"></div><div style="left:106px;top:425px;width:41px;height:34px;background:#6c62aa;border-radius:3px;box-shadow:inset 1px 1px 0 #8e86cc, 0 2px 0 #382d72;"></div><div style="left:14px;top:479px;width:41px;height:34px;background:#6c62aa;border-radius:3px;box-shadow:inset 1px 1px 0 #8e86cc, 0 2px 0 #382d72;"></div><div style="left:61px;top:480px;width:41px;height:34px;background:#c59bd6;border-radius:3px;box-shadow:inset 1px 1px 0 #8e86cc, 0 2px 0 #382d72;"></div><div style="left:106px;top:479px;width:41px;height:34px;background:#6c62aa;border-radius:3px;box-shadow:inset 1px 1px 0 #8e86cc, 0 2px 0 #382d72;"></div><div style="left:14px;top:533px;width:41px;height:34px;background:#6c62aa;border-radius:3px;box-shadow:inset 1px 1px 0 #8e86cc, 0 2px 0 #382d72;"></div><div style="left:60px;top:533px;width:41px;height:34px;background:#6c62aa;border-radius:3px;box-shadow:inset 1px 1px 0 #8e86cc, 0 2px 0 #382d72;"></div><div class="t" style="left:112.00px;top:499.73px;width:600px;font-size:8px;line-height:8px;color:#fff;text-align:left;font-weight:bold;">cll</div><div class="t" style="left:-80.50px;top:415.74px;width:600px;font-size:12px;line-height:12px;color:#fff;text-align:center;">Trigger On</div><div style="left:170px;top:429px;width:99px;height:21px;background:#2b2459;border-radius:3px;border-right:1px solid #8a80c8;border-bottom:1px solid #8a80c8;box-sizing:border-box;"></div><div class="t" style="left:176.00px;top:433.34px;width:600px;font-size:12px;line-height:12px;color:#fff;text-align:left;">C2</div><div class="t" style="left:-80.50px;top:475.14px;width:600px;font-size:12px;line-height:12px;color:#8a82bc;text-align:center;">Coupling</div><div style="left:170px;top:488px;width:99px;height:21px;background:#43377a;border-radius:3px;border-right:1px solid #8a80c8;border-bottom:1px solid #8a80c8;box-sizing:border-box;"></div><div class="t" style="left:176.00px;top:492.34px;width:600px;font-size:12px;line-height:12px;color:#8a82bc;text-align:left;">DC</div><div class="t" style="left:-80.50px;top:532.94px;width:600px;font-size:12px;line-height:12px;color:#fff;text-align:center;">Level</div><div style="left:170px;top:545.5px;width:99px;height:21px;background:#2b2459;border-radius:3px;border-right:1px solid #8a80c8;border-bottom:1px solid #8a80c8;box-sizing:border-box;"></div><div class="t" style="left:176.00px;top:549.84px;width:600px;font-size:12px;line-height:12px;color:#fff;text-align:left;">200 mV</div><div class="t" style="left:9.00px;top:414.84px;width:600px;font-size:12px;line-height:12px;color:#fff;text-align:center;">Positive</div><div style="left:288px;top:429px;width:43px;height:35px;background:#c59bd6;border-radius:3px;box-shadow:inset 1px 1px 0 #8e86cc, 0 2px 0 #382d72;"></div><div class="t" style="left:9.00px;top:471.84px;width:600px;font-size:12px;line-height:12px;color:#fff;text-align:center;">Negative</div><div style="left:287.5px;top:485px;width:43px;height:35px;background:#6c62aa;border-radius:3px;box-shadow:inset 1px 1px 0 #8e86cc, 0 2px 0 #382d72;"></div><div style="left:274.5px;top:531px;width:59px;height:35px;background:#6c62aa;border-radius:3px;box-shadow:inset 1px 1px 0 #8e86cc, 0 2px 0 #382d72;"></div><div class="t" style="left:4.00px;top:535.84px;width:600px;font-size:12px;line-height:12px;color:#fff;text-align:center;">Zero</div><div class="t" style="left:4.00px;top:549.84px;width:600px;font-size:12px;line-height:12px;color:#fff;text-align:center;">Level</div><div class="t" style="left:99.50px;top:415.24px;width:600px;font-size:12px;line-height:12px;color:#fff;text-align:center;">After Qualifier</div><div style="left:351px;top:429px;width:98px;height:21px;background:#2b2459;border-radius:3px;border-right:1px solid #8a80c8;border-bottom:1px solid #8a80c8;box-sizing:border-box;"></div><div class="t" style="left:357.00px;top:433.34px;width:600px;font-size:12px;line-height:12px;color:#fff;text-align:left;">C3</div><div class="t" style="left:99.50px;top:454.24px;width:600px;font-size:12px;line-height:12px;color:#fff;text-align:center;">has gone</div><div style="left:350px;top:467.5px;width:99px;height:21px;background:#2b2459;border-radius:3px;border-right:1px solid #8a80c8;border-bottom:1px solid #8a80c8;box-sizing:border-box;"></div><div class="t" style="left:356.00px;top:471.84px;width:600px;font-size:12px;line-height:12px;color:#fff;text-align:left;">Above</div><div style="left:350px;top:492px;width:99px;height:15px;background:#ffff00;border-radius:2px 2px 0 0;"></div><div class="t" style="left:99.50px;top:493.44px;width:600px;font-size:12px;line-height:12px;color:#000;text-align:center;">Level</div><div style="left:350px;top:506px;width:99px;height:21.5px;background:#2b2459;border-radius:3px;border-right:1px solid #8a80c8;border-bottom:1px solid #8a80c8;box-sizing:border-box;"></div><div class="t" style="left:356.00px;top:510.34px;width:600px;font-size:12px;line-height:12px;color:#fff;text-align:left;">500 mV</div><div style="left:350px;top:506px;width:1px;height:21px;background:#d8d040;"></div><div class="t" style="left:99.50px;top:532.84px;width:600px;font-size:12px;line-height:12px;color:#8a82bc;text-align:center;">Coupling</div><div style="left:351px;top:545.5px;width:98px;height:21px;background:#43377a;border-radius:3px;border-right:1px solid #8a80c8;border-bottom:1px solid #8a80c8;box-sizing:border-box;"></div><div class="t" style="left:357.00px;top:549.84px;width:600px;font-size:12px;line-height:12px;color:#8a82bc;text-align:left;">DC</div><div class="t" style="left:464.00px;top:412.84px;width:600px;font-size:12px;line-height:12px;color:#f0f010;text-align:left;">After qualified, wait:</div><div style="left:478px;top:430px;width:35px;height:35px;background:#c59bd6;border-radius:3px;box-shadow:inset 1px 1px 0 #8e86cc, 0 2px 0 #382d72;"></div><div class="t" style="left:196.00px;top:442.29px;width:600px;font-size:11px;line-height:11px;color:#fff;text-align:center;">None</div><div style="left:516.5px;top:429.5px;width:35px;height:35px;background:#6c62aa;border-radius:3px;box-shadow:inset 1px 1px 0 #8e86cc, 0 2px 0 #382d72;"></div><div style="left:477px;top:468px;width:35px;height:35px;background:#6c62aa;border-radius:3px;box-shadow:inset 1px 1px 0 #8e86cc, 0 2px 0 #382d72;"></div><div style="left:516.5px;top:468px;width:35px;height:35px;background:#6c62aa;border-radius:3px;box-shadow:inset 1px 1px 0 #8e86cc, 0 2px 0 #382d72;"></div><div class="t" style="left:234.00px;top:479.81px;width:600px;font-size:10.5px;line-height:10.5px;color:#fff;text-align:center;">Events</div><div style="left:466px;top:537px;width:104px;height:35px;border-radius:3px;border-right:1px solid #8a80c8;border-bottom:1px solid #8a80c8;box-shadow:inset 1px 1px 0 #3a2e78;box-sizing:border-box;"></div><div style="left:470px;top:546px;width:16px;height:16px;background:#fff8ee;"></div><div class="t" style="left:-34.50px;top:540.54px;width:600px;font-size:12px;line-height:12px;color:#fff;text-align:right;">Qualify first</div><div class="t" style="left:-34.50px;top:555.84px;width:600px;font-size:12px;line-height:12px;color:#fff;text-align:right;">segment only</div><div style="left:617px;top:413.5px;width:155px;height:78px;background:#000;border-right:1px solid #9a90d0;border-bottom:1px solid #9a90d0;box-sizing:border-box;"></div><div class="t" style="left:393.00px;top:502.59px;width:600px;font-size:12.3px;line-height:12.3px;color:#fff;text-align:center;">Trigger with edge trigger</div><div class="t" style="left:393.00px;top:517.59px;width:600px;font-size:12.3px;line-height:12.3px;color:#fff;text-align:center;">settings only after a</div><div class="t" style="left:393.00px;top:532.39px;width:600px;font-size:12.3px;line-height:12.3px;color:#fff;text-align:center;">second qualifying condition</div><div class="t" style="left:393.00px;top:547.29px;width:600px;font-size:12.3px;line-height:12.3px;color:#fff;text-align:center;">is satisfied once.</div><div class="t" style="left:183.50px;top:585.75px;width:600px;font-size:11.4px;line-height:11.4px;color:#fff;text-align:right;">1/6/2004 2:03:52 PM</div><div class="t" style="left:9.50px;top:582.20px;width:600px;font-size:14.3px;line-height:14.3px;color:#1414ff;text-align:left;font-weight:bold;letter-spacing:0.3px;">LeCroy</div><div style="left:6px;top:596.8px;width:56px;height:1.6px;background:#1414ff;"></div><svg style="position:absolute;left:0;top:0" width="800" height="600"><polyline points="17,452.5 25,452.5" fill="none" stroke="#000" stroke-width="1.1"/><polyline points="25,452.5 32,452.5 37.5,431.5 43.5,431.5" fill="none" stroke="#f0e040" stroke-width="1.1"/><polyline points="43.5,431.5 51,431.5" fill="none" stroke="#000" stroke-width="1.1"/><polyline points="65,452.5 70.5,452.5" fill="none" stroke="#000" stroke-width="1.1"/><polyline points="70.5,452.5 70.5,431.5" fill="none" stroke="#f0e040" stroke-width="1.1"/><polyline points="70.5,431.5 91.5,431.5" fill="none" stroke="#000" stroke-width="1.1"/><polyline points="91.5,431.5 91.5,452.5" fill="none" stroke="#f0e040" stroke-width="1.1"/><polyline points="91.5,452.5 97,452.5" fill="none" stroke="#000" stroke-width="1.1"/><polyline points="72,444.5 90,444.5" fill="none" stroke="#f0e040" stroke-width="1.6"/><polygon points="71,444.5 75,441.5 75,447.5" fill="#f0e040"/><polygon points="91,444.5 87,441.5 87,447.5" fill="#f0e040"/><polyline points="111,452.5 119.5,452.5 119.5,431.5 129.5,431.5 129.5,452.5 132,452.5" fill="none" stroke="#000" stroke-width="1.1"/><polyline points="132.5,452.5 132.5,431.5 136.5,431.5 136.5,452.5" fill="none" stroke="#f0e040" stroke-width="1.1"/><polyline points="137,452.5 143,452.5" fill="none" stroke="#000" stroke-width="1.1"/><polyline points="19,506.5 24.5,506.5" fill="none" stroke="#000" stroke-width="1.1"/><polyline points="24.5,506.5 24.5,485.5" fill="none" stroke="#f0e040" stroke-width="1.1"/><polyline points="24.5,485.5 34.5,485.5 34.5,506.5 45.5,506.5" fill="none" stroke="#000" stroke-width="1.1"/><polyline points="45.5,506.5 45.5,485.5" fill="none" stroke="#f0e040" stroke-width="1.1"/><polyline points="45.5,485.5 51,485.5" fill="none" stroke="#000" stroke-width="1.1"/><polyline points="26,498.5 44,498.5" fill="none" stroke="#f0e040" stroke-width="1.6"/><polygon points="25,498.5 29,495.5 29,501.5" fill="#f0e040"/><polygon points="45,498.5 41,495.5 41,501.5" fill="#f0e040"/><polyline points="64.5,495.5 75.5,495.5 75.5,484.5 83.5,484.5 83.5,495.5 91.5,495.5" fill="none" stroke="#e8c020" stroke-width="1.1"/><polyline points="66,509.5 75.5,509.5 75.5,499.5 83.5,499.5 83.5,509.5 92,509.5" fill="none" stroke="#000" stroke-width="1.1"/><path d="M91,490 Q98,491 97,497 Q96,502 91,503" fill="none" stroke="#000" stroke-width="1.2"/><polygon points="89,503 93,500 93,506" fill="#000"/><rect x="137.5" y="481.5" width="4" height="29" fill="#c0c0c0" stroke="#000" stroke-width="1"/><defs><linearGradient id="gy" x1="0" x2="1" y1="0" y2="0"><stop offset="0" stop-color="#fff8a0"/><stop offset="0.35" stop-color="#f8e030"/><stop offset="1" stop-color="#f0c800"/></linearGradient></defs><path d="M116.5,486.5 L127.2,486.5 L131.5,490.5 L131.5,492.5 L127.2,496.5 L116.5,496.5 Z" fill="url(#gy)" stroke="#000" stroke-width="1.3"/><line x1="112.0" y1="487.5" x2="115.5" y2="487.5" stroke="#000" stroke-width="1"/><line x1="112.0" y1="489.5" x2="115.5" y2="489.5" stroke="#000" stroke-width="1"/><line x1="112.0" y1="491.5" x2="115.5" y2="491.5" stroke="#000" stroke-width="1"/><line x1="112.0" y1="493.5" x2="115.5" y2="493.5" stroke="#000" stroke-width="1"/><line x1="112.0" y1="495.5" x2="115.5" y2="495.5" stroke="#000" stroke-width="1"/><polyline points="131.5,491.5 137.5,491.5" fill="none" stroke="#000" stroke-width="1"/><polyline points="123,504.5 134,504.5" fill="none" stroke="#e8f020" stroke-width="1.5"/><polygon points="137,504.5 133,501.5 133,507.5" fill="#e8f020"/><polyline points="19,560.5 28.5,560.5 28.5,539.5 41.5,539.5 41.5,560.5 43,560.5" fill="none" stroke="#000" stroke-width="1.1"/><polyline points="43,561 51,561" fill="none" stroke="#e0e020" stroke-width="1.5"/><path d="M71,544.5 L82.7,544.5 L87,548.5 L87,550.5 L82.7,554.5 L71,554.5 Z" fill="url(#gy)" stroke="#000" stroke-width="1.3"/><line x1="66.5" y1="545.5" x2="70" y2="545.5" stroke="#000" stroke-width="1"/><line x1="66.5" y1="547.5" x2="70" y2="547.5" stroke="#000" stroke-width="1"/><line x1="66.5" y1="549.5" x2="70" y2="549.5" stroke="#000" stroke-width="1"/><line x1="66.5" y1="551.5" x2="70" y2="551.5" stroke="#000" stroke-width="1"/><line x1="66.5" y1="553.5" x2="70" y2="553.5" stroke="#000" stroke-width="1"/><polyline points="87,549.5 94.5,549.5" fill="none" stroke="#000" stroke-width="1"/><polyline points="294,457.5 306.5,457.5 312.5,436.5 326,436.5" fill="none" stroke="#000" stroke-width="1.4"/><rect x="307" y="444" width="5" height="5" fill="#f0d030"/><polygon points="306.5,463 313.5,463 310,459" fill="#fff"/><polyline points="293.5,492.5 306,492.5 312,513.5 325.5,513.5" fill="none" stroke="#000" stroke-width="1.4"/><rect x="307" y="500" width="5" height="5" fill="#f0d030"/><polygon points="305.5,519 312.5,519 309,515" fill="#fff"/><circle cx="530" cy="435.2" r="3" fill="#8a84b8" stroke="#000" stroke-width="1.3"/><rect x="528" y="436.5" width="4" height="2.5" fill="#000"/><circle cx="524.5" cy="438.5" r="1.1" fill="#e0e0e0"/><circle cx="535.5" cy="438.5" r="1.1" fill="#e0e0e0"/><ellipse cx="530" cy="448" rx="10.5" ry="9.6" fill="#d6d2ca" stroke="#000" stroke-width="1.5"/><circle cx="537.0" cy="448.0" r="0.6" fill="#8a8a8a"/><circle cx="533.5" cy="453.6" r="0.6" fill="#8a8a8a"/><circle cx="526.5" cy="453.6" r="0.6" fill="#8a8a8a"/><circle cx="523.0" cy="448.0" r="0.6" fill="#8a8a8a"/><circle cx="526.5" cy="442.4" r="0.6" fill="#8a8a8a"/><circle cx="533.5" cy="442.4" r="0.6" fill="#8a8a8a"/><polyline points="524,443 530,449 535,449" fill="none" stroke="#000" stroke-width="1.2"/><polyline points="547.5,432.5 541,438.5 547.5,445" fill="none" stroke="#000" stroke-width="1.3"/><circle cx="490.8" cy="473.9" r="3" fill="#8a84b8" stroke="#000" stroke-width="1.3"/><rect x="488.8" y="475.2" width="4" height="2.5" fill="#000"/><circle cx="485.3" cy="477.2" r="1.1" fill="#e0e0e0"/><circle cx="496.3" cy="477.2" r="1.1" fill="#e0e0e0"/><ellipse cx="490.8" cy="486.7" rx="10.5" ry="9.6" fill="#d6d2ca" stroke="#000" stroke-width="1.5"/><circle cx="497.8" cy="486.7" r="0.6" fill="#8a8a8a"/><circle cx="494.3" cy="492.3" r="0.6" fill="#8a8a8a"/><circle cx="487.3" cy="492.3" r="0.6" fill="#8a8a8a"/><circle cx="483.8" cy="486.7" r="0.6" fill="#8a8a8a"/><circle cx="487.3" cy="481.1" r="0.6" fill="#8a8a8a"/><circle cx="494.3" cy="481.1" r="0.6" fill="#8a8a8a"/><polyline points="484.8,481.7 490.8,487.7 495.8,487.7" fill="none" stroke="#000" stroke-width="1.2"/><polyline points="502.8,471.2 508.8,477.2 502.8,483.7" fill="none" stroke="#000" stroke-width="1.3"/><rect x="652" y="446" width="15" height="1.3" fill="#fff"/><rect x="665.5" y="431" width="4" height="16" fill="#20d0e0"/><line x1="670" y1="431.5" x2="738" y2="431.5" stroke="#fff" stroke-width="1.2" stroke-dasharray="3 2"/><line x1="670" y1="446.5" x2="738" y2="446.5" stroke="#fff" stroke-width="1.2" stroke-dasharray="3 2"/><polyline points="652,466.5 693,466.5 693,451.5 702,451.5 702,466.5 738,466.5" fill="none" stroke="#fff" stroke-width="1.3"/><rect x="691" y="449" width="4" height="18" fill="#e0207a"/><polygon points="689,476 697,476 693,470" fill="#e0207a"/></svg>
</body></html>
